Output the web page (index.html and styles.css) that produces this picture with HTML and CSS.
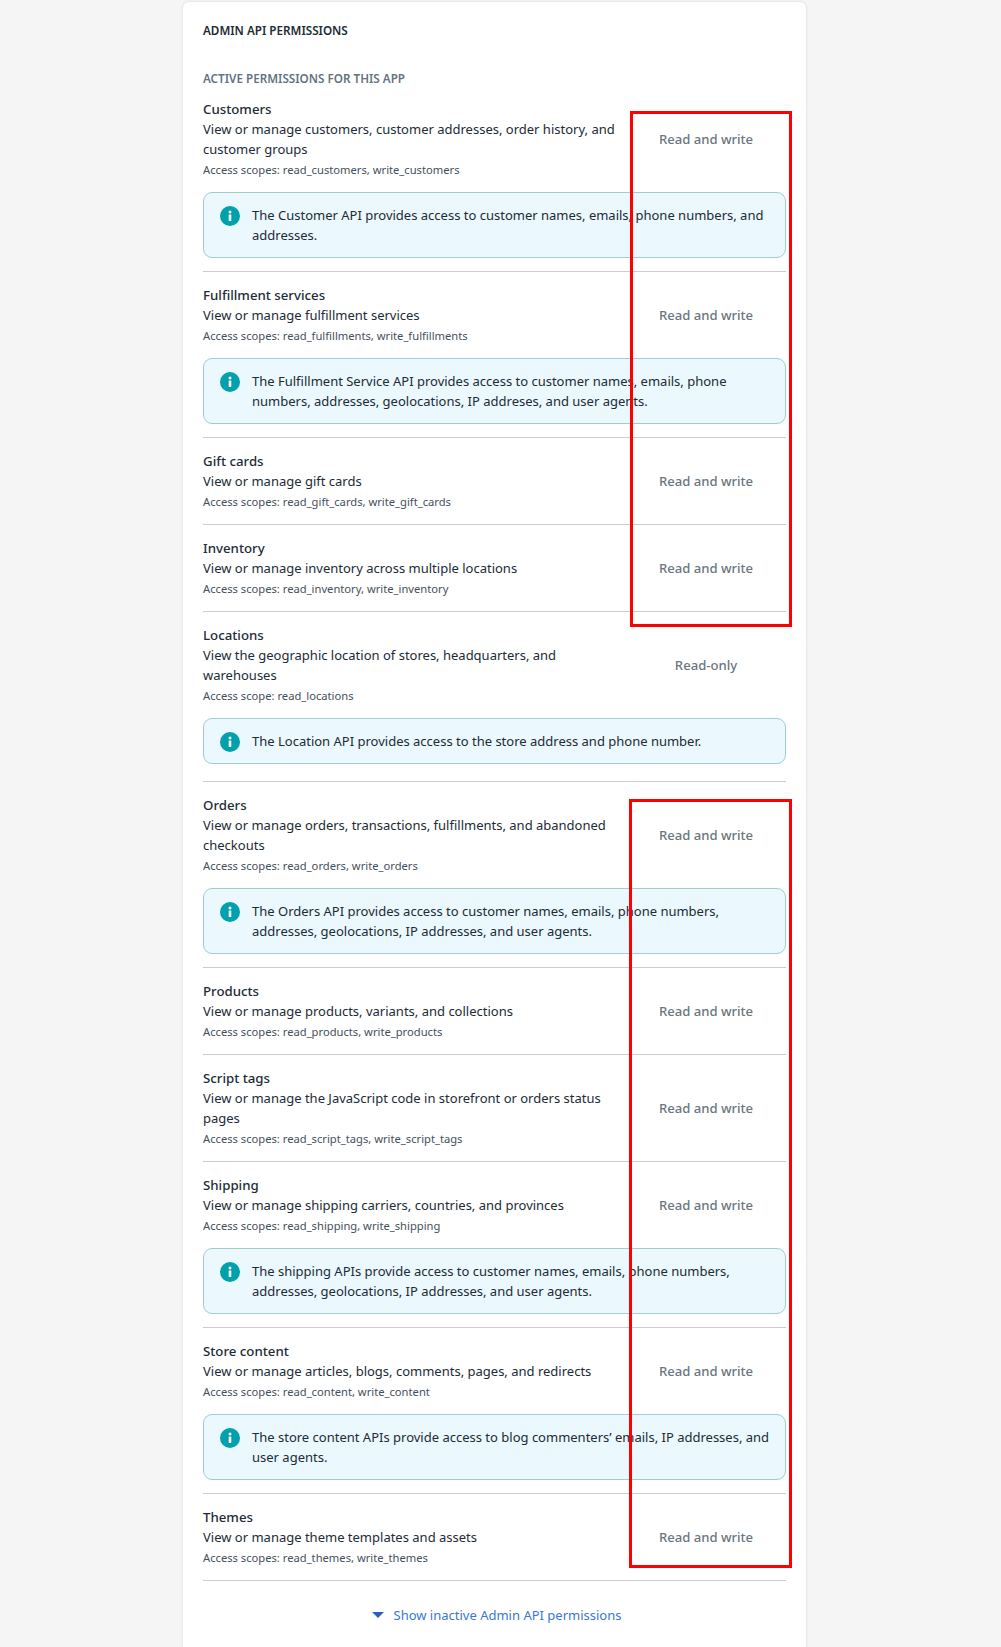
FILE: index.html
```html
<!DOCTYPE html>
<html lang="en">
<head>
<meta charset="utf-8">
<title>Admin API permissions</title>
<link rel="stylesheet" href="styles.css">
</head>
<body>
<svg class="defs" width="0" height="0" aria-hidden="true">
  <symbol id="info" viewBox="0 0 20 20">
    <circle cx="10" cy="10" r="10" fill="#00a0ac"/>
    <circle cx="10" cy="6" r="1.5" fill="#fff"/>
    <rect x="8.7" y="8.6" width="2.6" height="6.4" rx=".6" fill="#fff"/>
  </symbol>
</svg>
<main class="card">
  <h2 class="card-title">ADMIN API PERMISSIONS</h2>
  <h3 class="section-title">ACTIVE PERMISSIONS FOR THIS APP</h3>
  <ul class="list">
    <li class="row row-first">
      <div class="head">
        <div class="info"><div class="name">Customers</div><p class="desc">View or manage customers, customer addresses, order history, and customer groups</p><p class="scope">Access scopes: read_customers, write_customers</p></div>
        <div class="level">Read and write</div>
      </div>
      <div class="alert"><svg class="icon"><use href="#info"/></svg><p>The Customer API provides access to customer names, emails, phone numbers, and addresses.</p></div>
    </li>
    <li class="row">
      <div class="head">
        <div class="info"><div class="name">Fulfillment services</div><p class="desc">View or manage fulfillment services</p><p class="scope">Access scopes: read_fulfillments, write_fulfillments</p></div>
        <div class="level">Read and write</div>
      </div>
      <div class="alert"><svg class="icon"><use href="#info"/></svg><p>The Fulfillment Service API provides access to customer names, emails, phone numbers, addresses, geolocations, IP addreses, and user agents.</p></div>
    </li>
    <li class="row">
      <div class="head">
        <div class="info"><div class="name">Gift cards</div><p class="desc">View or manage gift cards</p><p class="scope">Access scopes: read_gift_cards, write_gift_cards</p></div>
        <div class="level">Read and write</div>
      </div>
    </li>
    <li class="row">
      <div class="head">
        <div class="info"><div class="name">Inventory</div><p class="desc">View or manage inventory across multiple locations</p><p class="scope">Access scopes: read_inventory, write_inventory</p></div>
        <div class="level">Read and write</div>
      </div>
    </li>
    <li class="row row-single">
      <div class="head">
        <div class="info"><div class="name">Locations</div><p class="desc">View the geographic location of stores, headquarters, and warehouses</p><p class="scope">Access scope: read_locations</p></div>
        <div class="level">Read-only</div>
      </div>
      <div class="alert alert-single"><svg class="icon"><use href="#info"/></svg><p>The Location API provides access to the store address and phone number.</p></div>
    </li>
    <li class="row">
      <div class="head">
        <div class="info"><div class="name">Orders</div><p class="desc">View or manage orders, transactions, fulfillments, and abandoned checkouts</p><p class="scope">Access scopes: read_orders, write_orders</p></div>
        <div class="level">Read and write</div>
      </div>
      <div class="alert"><svg class="icon"><use href="#info"/></svg><p>The Orders API provides access to customer names, emails, phone numbers, addresses, geolocations, IP addresses, and user agents.</p></div>
    </li>
    <li class="row">
      <div class="head">
        <div class="info"><div class="name">Products</div><p class="desc">View or manage products, variants, and collections</p><p class="scope">Access scopes: read_products, write_products</p></div>
        <div class="level">Read and write</div>
      </div>
    </li>
    <li class="row">
      <div class="head">
        <div class="info"><div class="name">Script tags</div><p class="desc">View or manage the JavaScript code in storefront or orders status pages</p><p class="scope">Access scopes: read_script_tags, write_script_tags</p></div>
        <div class="level">Read and write</div>
      </div>
    </li>
    <li class="row">
      <div class="head">
        <div class="info"><div class="name">Shipping</div><p class="desc">View or manage shipping carriers, countries, and provinces</p><p class="scope">Access scopes: read_shipping, write_shipping</p></div>
        <div class="level">Read and write</div>
      </div>
      <div class="alert"><svg class="icon"><use href="#info"/></svg><p>The shipping APIs provide access to customer names, emails, phone numbers, addresses, geolocations, IP addresses, and user agents.</p></div>
    </li>
    <li class="row">
      <div class="head">
        <div class="info"><div class="name">Store content</div><p class="desc">View or manage articles, blogs, comments, pages, and redirects</p><p class="scope">Access scopes: read_content, write_content</p></div>
        <div class="level">Read and write</div>
      </div>
      <div class="alert"><svg class="icon"><use href="#info"/></svg><p>The store content APIs provide access to blog commenters’ emails, IP addresses, and user agents.</p></div>
    </li>
    <li class="row">
      <div class="head">
        <div class="info"><div class="name">Themes</div><p class="desc">View or manage theme templates and assets</p><p class="scope">Access scopes: read_themes, write_themes</p></div>
        <div class="level">Read and write</div>
      </div>
    </li>
  </ul>
  <a class="more" href="#"><span class="caret"></span>Show inactive Admin API permissions</a>
</main>
<div class="mark mark-one"></div>
<div class="mark mark-two"></div>
</body>
</html>
```
FILE: styles.css
```css
* { box-sizing: border-box; }
html, body { margin: 0; padding: 0; }
body {
  height: 1647px;
  overflow: hidden;
  position: relative;
  background: #f5f5f5;
  font-family: "Noto Sans", "Open Sans", sans-serif;
  font-size: 13px;
  line-height: 20px;
  color: #212b36;
}
.defs { position: absolute; }
p, h2, h3, ul { margin: 0; padding: 0; }
.card {
  width: 623px;
  margin: 2px 0 0 183px;
  padding: 18px 20px 0;
  height: 1700px;
  background: #fff;
  border-radius: 6px;
  box-shadow: 0 0 3px rgba(63, 63, 68, .15);
}
.card-title {
  font-size: 11.7px;
  font-weight: 600;
  line-height: 20px;
  color: #212b36;
}
.section-title {
  margin-top: 28px;
  font-size: 11.7px;
  font-weight: 600;
  line-height: 20px;
  color: #637381;
}
.list { list-style: none; }
.row {
  padding: 13px 0 13px;
  border-bottom: 1px solid #ccc;
}
.row-first { padding-top: 11px; }
.row-single { padding-bottom: 17px; }
.head {
  display: flex;
  align-items: center;
}
.info { flex: 1; min-width: 0; }
.name { font-size: 13.25px; font-weight: 500; }
.scope {
  margin: 1px 0 -1px;
  font-size: 11.2px;
  color: #454f5b;
}
.level {
  width: 160px;
  flex: none;
  text-align: center;
  font-size: 13.1px;
  font-weight: 500;
  color: #6b7680;
}
.alert {
  display: flex;
  gap: 12px;
  margin-top: 13px;
  padding: 12px 12px 12px 16px;
  background: #ebf8fd;
  border: 1px solid #a0cdd3;
  border-radius: 9px;
}
.alert-single { height: 46px; }
.icon { width: 20px; height: 20px; flex: none; margin-top: 1px; }
.more {
  display: flex;
  align-items: center;
  justify-content: center;
  gap: 10px;
  margin-top: 24px;
  padding-left: 4px;
  color: #3a76d6;
  text-decoration: none;
}
.caret {
  width: 0;
  height: 0;
  border-style: solid;
  border-width: 6px 6px 0;
  border-color: #2c5fc4 transparent transparent;
}
.mark {
  position: absolute;
  left: 630px;
  width: 162px;
  border: 3px solid #f00;
  pointer-events: none;
}
.mark-one { top: 111px; height: 516px; }
.mark-two { left: 629px; width: 163px; top: 799px; height: 769px; }
```
